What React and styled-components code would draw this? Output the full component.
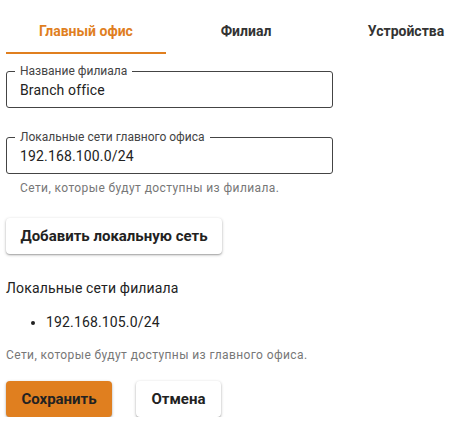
import React from "react";
import styled, { createGlobalStyle } from "styled-components";

const GlobalStyle = createGlobalStyle`
  body {
    margin: 0;
    background: #fff;
    font-family: Roboto, "Noto Sans", sans-serif;
    overflow: hidden;
  }
`;

const tabs = ["Главный офис", "Филиал", "Устройства"];

const App = () => {
  return (
    <Page>
      <GlobalStyle />
      <Tabs>
        {tabs.map((t, i) => (
          <Tab key={t} active={i === 0}>
            {t}
          </Tab>
        ))}
      </Tabs>
      <Form>
        <Field>
          <Legend>Название филиала</Legend>
          <Value>Branch office</Value>
        </Field>
        <Field top={29}>
          <Legend>Локальные сети главного офиса</Legend>
          <Value>192.168.100.0/24</Value>
        </Field>
        <Helper indent>Сети, которые будут доступны из филиала.</Helper>
        <Button top={20} width={216}>
          Добавить локальную сеть
        </Button>
        <Heading>Локальные сети филиала</Heading>
        <List>
          <li>192.168.105.0/24</li>
        </List>
        <Helper>Сети, которые будут доступны из главного офиса.</Helper>
        <Actions>
          <Button primary width={106}>
            Сохранить
          </Button>
          <Button width={85}>Отмена</Button>
        </Actions>
      </Form>
    </Page>
  );
};

const Page = styled.div`
  padding: 6px 0 0 6px;
  width: 480px;
`;

const Tabs = styled.div`
  display: flex;
`;

const Tab = styled.div`
  flex: 0 0 160px;
  height: 48px;
  padding-top: 3px;
  display: flex;
  align-items: center;
  justify-content: center;
  box-sizing: border-box;
  font-size: 14px;
  font-weight: 700;
  color: ${({ active }) => (active ? "#e07f1f" : "#333")};
  border-bottom: 2px solid ${({ active }) => (active ? "#e07f1f" : "transparent")};
  white-space: nowrap;
`;

const Form = styled.div`
  display: flex;
  flex-direction: column;
  align-items: flex-start;
  padding-top: 17px;
`;

const Field = styled.div`
  position: relative;
  width: 327px;
  height: 37px;
  box-sizing: border-box;
  border: 1px solid #444;
  border-radius: 3px;
  margin-top: ${({ top }) => top || 0}px;
  display: flex;
  align-items: center;
  padding: 0 13px;
`;

const Legend = styled.span`
  position: absolute;
  left: 8px;
  top: -9px;
  padding: 0 5px;
  background: #fff;
  font-size: 12px;
  line-height: 16px;
  color: #444;
  white-space: nowrap;
`;

const Value = styled.span`
  font-size: 14px;
  letter-spacing: 0.15px;
  color: #222;
`;

const Helper = styled.div`
  font-size: 12px;
  letter-spacing: 0.4px;
  line-height: 20px;
  color: #777;
  margin-top: ${({ indent }) => (indent ? 4 : 0)}px;
  padding-left: ${({ indent }) => (indent ? 14 : 0)}px;
`;

const Button = styled.button`
  margin-top: ${({ top }) => top || 0}px;
  width: ${({ width }) => width}px;
  height: 36px;
  border: none;
  border-radius: 4px;
  font-family: Roboto, "Noto Sans", sans-serif;
  font-size: 15px;
  font-weight: 700;
  color: #222;
  background: ${({ primary }) => (primary ? "#e07f1f" : "#fff")};
  box-shadow: 0 1px 3px rgba(0, 0, 0, 0.3), 0 1px 1px rgba(0, 0, 0, 0.14);
  padding: 0;
  white-space: nowrap;
`;

const Heading = styled.div`
  margin-top: 22px;
  font-size: 14px;
  letter-spacing: 0.15px;
  line-height: 24px;
  color: #222;
`;

const List = styled.ul`
  margin: 10px 0 11px;
  padding-left: 40px;
  font-size: 14px;
  letter-spacing: 0.15px;
  line-height: 24px;
  color: #222;
`;

const Actions = styled.div`
  display: flex;
  gap: 24px;
  margin-top: 16px;
`;

export default App;
